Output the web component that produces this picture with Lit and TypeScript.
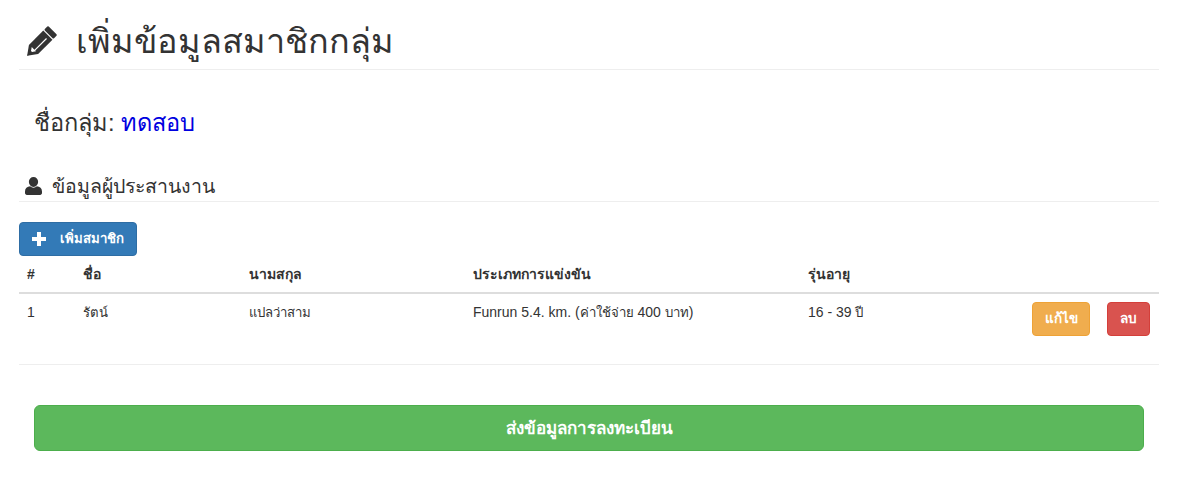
import { LitElement, html, css } from "lit";
import { customElement } from "lit/decorators.js";

@customElement("app-root")
export class AppRoot extends LitElement {
  static styles = css`
    :host { display: block; font-family: "Liberation Sans", Arial, sans-serif; font-size: 14px; line-height: 20px; color: #333; background: #fff; height: 482px; overflow: hidden; }
    .page { padding: 0 21px 0 19px; }
    .h1 { display: flex; align-items: center; gap: 18px; height: 70px; box-sizing: border-box; border-bottom: 1px solid #eee; margin: 0; padding: 13px 0 0 7px; font-size: 34.2px; font-weight: 500; line-height: 40px; }
    .group { margin: 0; padding: 37px 15px 0; font-size: 23.6px; line-height: 33px; font-weight: 400; height: 63px; box-sizing: content-box; }
    .group b { color: #0000e0; font-weight: 400; }
    .h4 { display: flex; align-items: center; gap: 10px; margin: 0; padding: 0 0 0 6px; height: 32px; box-sizing: border-box; border-bottom: 1px solid #eee; font-size: 19.5px; font-weight: 500; }
    .btn { display: inline-flex; align-items: center; justify-content: center; box-sizing: border-box; border: 1px solid transparent; border-radius: 4px; color: #fff; font-size: 14px; font-weight: 700; }
    .add { margin-top: 20px; width: 118px; height: 34px; gap: 14px; background: #337ab7; border-color: #2e6da4; font-size: 13.2px; }
    table { width: 100%; border-collapse: collapse; table-layout: fixed; }
    th { text-align: left; font-weight: 700; padding: 8px; height: 20px; border-bottom: 2px solid #ddd; }
    td { padding: 8px; vertical-align: top; border-bottom: 1px solid #eee; height: 71px; box-sizing: border-box; }
    .th { font-size: 13.2px; }
    .acts { display: flex; justify-content: flex-end; gap: 17px; margin-right: 1px; }
    .edit { height: 34px; width: 58px; background: #f0ad4e; border-color: #eea236; font-size: 13.5px; }
    .del { height: 34px; width: 43px; background: #d9534f; border-color: #d43f3a; font-size: 13.5px; }
    .send { display: flex; margin: 40px 15px 0; height: 46px; padding-top: 2px; background: #5cb85c; border-color: #4cae4c; border-radius: 6px; font-size: 17px; }
  `;

  render() {
    return html`<div class="page">
      <h1 class="h1">
        <svg width="32" height="32" viewBox="0 0 32 32" aria-hidden="true">
          <g transform="rotate(45 16 16) translate(16 16)">
            <rect x="-6.500" y="-15" width="13" height="5.500" rx="1" fill="#333"/>
            <path fill="#333" d="M-6.500-8.300H6.500V12L0 21-6.500 12Z"/>
            <path fill="#fff" d="M.8-5H2V11.500H3L.8 14.800-.8 14.800-3 11.500H.8Z"/>
            <path fill="#333" d="M-1.800 16.500H1.800L0 21Z"/>
          </g>
        </svg>
        เพิ่มข้อมูลสมาชิกกลุ่ม
      </h1>
      <h2 class="group">ชื่อกลุ่ม: <b>ทดสอบ</b></h2>
      <h4 class="h4">
        <svg width="17" height="18" viewBox="0 0 17 18" aria-hidden="true"><path fill="#333" d="M8.500 0a4.600 4.600 0 0 1 4.600 4.800c0 2.600-2 5.200-4.600 5.200S3.900 7.400 3.900 4.800A4.600 4.600 0 0 1 8.500 0ZM5.100 9.300c1 .9 2.100 1.400 3.400 1.400s2.400-.5 3.400-1.400c2.900.3 5.100 2.100 5.100 5.200v1.600c0 1-.8 1.900-1.900 1.900H1.900C.8 18 0 17.100 0 16.100v-1.600c0-3.100 2.200-4.900 5.100-5.200Z"/></svg>
        ข้อมูลผู้ประสานงาน
      </h4>
      <div class="btn add">
        <svg width="14" height="14" viewBox="0 0 14 14" aria-hidden="true"><path fill="#fff" d="M5 0h4v5h5v4H9v5H5V9H0V5h5Z"/></svg>
        เพิ่มสมาชิก
      </div>
      <table>
        <colgroup><col style="width:56px"/><col style="width:166px"/><col style="width:224px"/><col style="width:335px"/><col style="width:150px"/><col/></colgroup>
        <thead><tr><th>#</th><th>ชื่อ</th><th>นามสกุล</th><th>ประเภทการแข่งขัน</th><th>รุ่นอายุ</th><th></th></tr></thead>
        <tbody><tr><td>1</td><td><span class="th">รัตน์</span></td><td><span class="th">แปลว่าสาม</span></td><td>Funrun 5.4. km. (<span class="th">ค่าใช้จ่าย</span> 400 <span class="th">บาท</span>)</td><td>16 - 39 <span class="th">ปี</span></td>
          <td><div class="acts"><div class="btn edit">แก้ไข</div><div class="btn del">ลบ</div></div></td></tr></tbody>
      </table>
      <div class="btn send">ส่งข้อมูลการลงทะเบียน</div>
    </div>`;
  }
}
